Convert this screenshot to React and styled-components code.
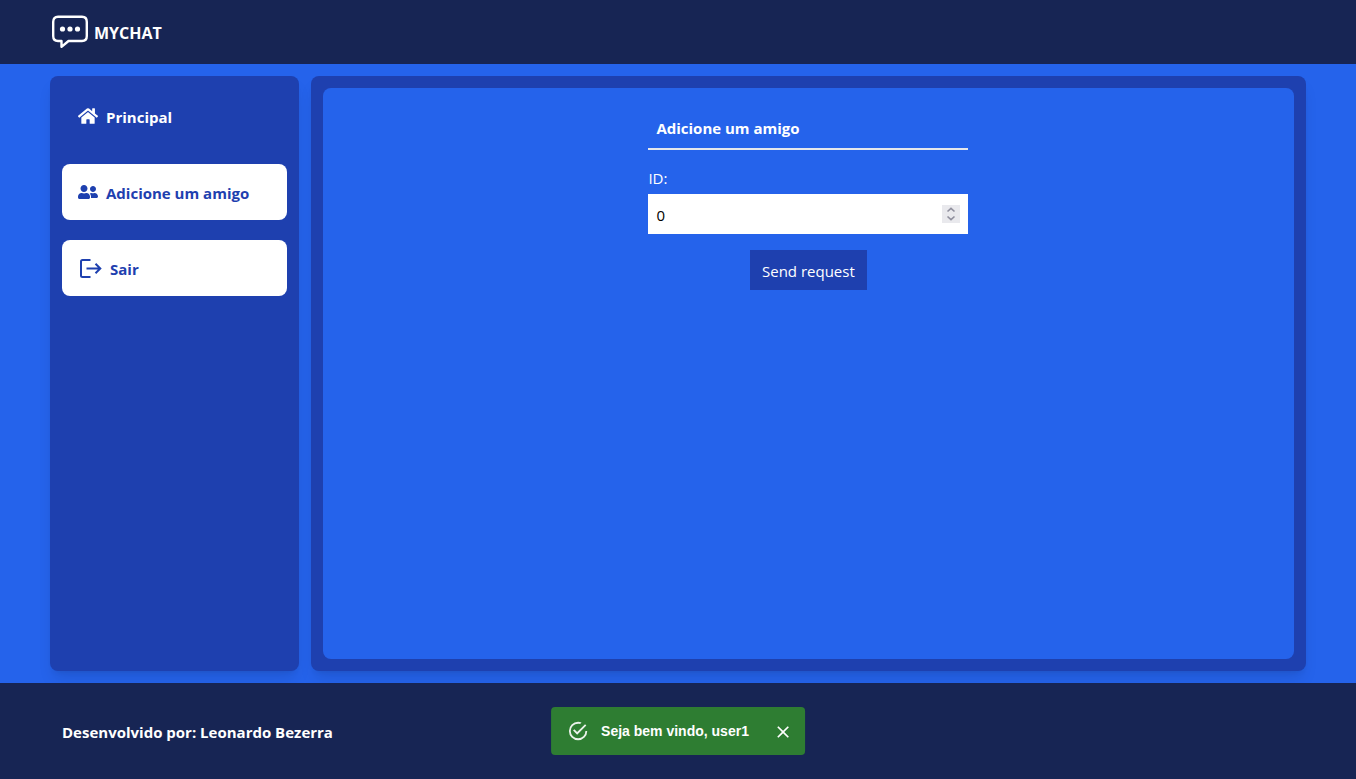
import React, { useState } from "react";
import styled, { createGlobalStyle } from "styled-components";
import { FaHome, FaUserFriends } from "react-icons/fa";

const GlobalStyle = createGlobalStyle`
  *, *::before, *::after { box-sizing: border-box; }
  body {
    margin: 0;
    background: #2563eb;
    color: #fff;
    font-family: "Segoe UI", "Open Sans", "Noto Sans", sans-serif;
    font-size: 15px;
    line-height: 24px;
  }
  button, input { font: inherit; }
`;

const Page = styled.div`
  display: flex;
  flex-direction: column;
  min-height: 100vh;
`;

const Header = styled.header`
  display: flex;
  align-items: center;
  height: 64px;
  padding: 0 50px;
  background: #172554;
`;

const Brand = styled.a`
  display: flex;
  align-items: center;
  gap: 4px;
  color: #fff;
  font-size: 16px;
  font-weight: 700;
  text-decoration: none;
`;

const BrandName = styled.span`
  padding-top: 2px;
`;

const Main = styled.main`
  flex: 1;
  display: grid;
  grid-template-columns: 1fr 4fr;
  gap: 12px;
  padding: 12px 50px;
`;

const Panel = styled.div`
  padding: 12px;
  border-radius: 8px;
  background: #1e40af;
  box-shadow: 0 10px 15px -3px rgba(0, 0, 0, 0.1), 0 4px 6px -4px rgba(0, 0, 0, 0.1);
`;

const Sidebar = styled(Panel).attrs({ as: "nav" })`
  display: flex;
  flex-direction: column;
  gap: 20px;
`;

const NavLink = styled.a`
  display: flex;
  align-items: center;
  gap: 8px;
  height: 56px;
  padding: 0 16px;
  border-radius: 8px;
  background: ${({ $active }) => ($active ? "transparent" : "#fff")};
  color: ${({ $active }) => ($active ? "#fff" : "#1e40af")};
  font-weight: 700;
  text-decoration: none;
`;

const NavLabel = styled.span`
  padding-top: 2px;
`;

const Content = styled.section`
  display: flex;
  justify-content: center;
  height: 100%;
  padding: 20px;
  border-radius: 8px;
  background: #2563eb;
`;

const Form = styled.form`
  display: flex;
  flex-direction: column;
  width: 320px;
`;

const Title = styled.h1`
  margin: 0 0 16px;
  padding: 8px;
  border-bottom: 2px solid #e5e7eb;
  font-size: 15px;
  font-weight: 700;
`;

const Label = styled.label`
  margin-bottom: 4px;
`;

const Field = styled.div`
  display: flex;
  align-items: center;
  height: 40px;
  padding: 0 8px;
  background: #fff;
`;

const NumberInput = styled.input`
  flex: 1;
  min-width: 0;
  padding: 2px 0 0;
  border: 0;
  outline: 0;
  background: transparent;
  color: #000;
  appearance: textfield;
  &::-webkit-inner-spin-button { appearance: none; margin: 0; }
`;

const Stepper = styled.div`
  display: flex;
  flex-direction: column;
  background: #e9e9ed;
`;

const StepButton = styled.button`
  display: flex;
  width: 18px;
  height: 9px;
  padding: 0;
  border: 0;
  background: transparent;
  color: #8f8f9d;
`;

const SubmitButton = styled.button`
  align-self: center;
  height: 40px;
  margin-top: 16px;
  padding: 2px 12px 0;
  border: 0;
  background: #1e40af;
  color: #fff;
`;

const Footer = styled.footer`
  display: flex;
  align-items: center;
  height: 96px;
  padding: 2px 62px 0;
  background: #172554;
  font-weight: 700;
`;

const Toast = styled.div`
  position: fixed;
  bottom: 24px;
  left: 50%;
  transform: translateX(-50%);
  display: flex;
  align-items: center;
  height: 48px;
  padding: 0 12px 0 16px;
  border-radius: 4px;
  background: #2e7d32;
  font-family: "Liberation Sans", Arial, sans-serif;
  font-size: 14px;
  font-weight: 700;
  line-height: 20px;
  white-space: nowrap;
`;

const ToastText = styled.span`
  margin: 0 24px 0 12px;
`;

const CloseButton = styled.button`
  display: flex;
  padding: 2px 0 0;
  border: 0;
  background: transparent;
  color: #fff;
`;

const ChatIcon = () => (
  <svg width="40" height="40" viewBox="0 0 40 40" fill="none" aria-hidden="true">
    <path
      d="M8 4.800H32Q36.800 4.800 36.800 10V24Q36.800 29 32 29H18.500L11.500 34.800V29H8Q3.200 29 3.200 24V10Q3.200 4.800 8 4.800Z"
      stroke="#fff"
      strokeWidth="2.400"
      strokeLinejoin="round"
    />
    <circle cx="12.500" cy="17" r="2.600" fill="#fff" />
    <circle cx="20" cy="17" r="2.600" fill="#fff" />
    <circle cx="27.500" cy="17" r="2.600" fill="#fff" />
  </svg>
);

const LogoutIcon = () => (
  <svg width="24" height="24" viewBox="0 0 24 24" fill="none" stroke="currentColor" aria-hidden="true">
    <path d="M12.500 4H4.500Q3 4 3 5.500V19.500Q3 21 4.500 21H12.500" strokeWidth="2" />
    <path d="M8.500 12.500H22M17.500 7.700L22.300 12.500L17.500 17.300" strokeWidth="2" />
  </svg>
);

const SuccessIcon = () => (
  <svg width="22" height="22" viewBox="0 0 24 24" fill="#fff" opacity="0.9" aria-hidden="true">
    <path d="M20,12A8,8 0 0,1 12,20A8,8 0 0,1 4,12A8,8 0 0,1 12,4C12.76,4 13.5,4.11 14.2, 4.31L15.77,2.74C14.61,2.26 13.34,2 12,2A10,10 0 0,0 2,12A10,10 0 0,0 12,22A10,10 0 0, 0 22,12M7.91,10.08L6.5,11.5L11,16L21,6L19.59,4.58L11,13.17L7.91,10.08Z" />
  </svg>
);

const CloseIcon = () => (
  <svg width="20" height="20" viewBox="0 0 24 24" fill="currentColor" aria-hidden="true">
    <path d="M19 6.41L17.59 5 12 10.59 6.41 5 5 6.41 10.59 12 5 17.59 6.41 19 12 13.41 17.59 19 19 17.59 13.41 12z" />
  </svg>
);

const Chevron = ({ d }) => (
  <svg width="18" height="9" viewBox="0 0 18 9" fill="none" stroke="currentColor" strokeWidth="1.600" aria-hidden="true">
    <path d={d} />
  </svg>
);

export default function App() {
  const [id, setId] = useState(0);
  const [toastOpen, setToastOpen] = useState(true);

  return (
    <>
      <GlobalStyle />
      <Page>
        <Header>
          <Brand href="#">
            <ChatIcon />
            <BrandName>MYCHAT</BrandName>
          </Brand>
        </Header>
        <Main>
          <Sidebar>
            <NavLink href="#principal" $active>
              <FaHome size={20} />
              <NavLabel>Principal</NavLabel>
            </NavLink>
            <NavLink href="#amigo">
              <FaUserFriends size={20} />
              <NavLabel>Adicione um amigo</NavLabel>
            </NavLink>
            <NavLink href="#sair">
              <LogoutIcon />
              <NavLabel>Sair</NavLabel>
            </NavLink>
          </Sidebar>
          <Panel>
            <Content>
              <Form onSubmit={(e) => e.preventDefault()}>
                <Title>Adicione um amigo</Title>
                <Label htmlFor="friend-id">ID:</Label>
                <Field>
                  <NumberInput
                    id="friend-id"
                    type="number"
                    value={id}
                    onChange={(e) => setId(e.target.value)}
                  />
                  <Stepper>
                    <StepButton type="button" aria-label="Aumentar" onClick={() => setId(Number(id) + 1)}>
                      <Chevron d="M5.500 6.500L9 3.300L12.500 6.500" />
                    </StepButton>
                    <StepButton type="button" aria-label="Diminuir" onClick={() => setId(Number(id) - 1)}>
                      <Chevron d="M5.500 2.500L9 5.700L12.500 2.500" />
                    </StepButton>
                  </Stepper>
                </Field>
                <SubmitButton type="submit">Send request</SubmitButton>
              </Form>
            </Content>
          </Panel>
        </Main>
        <Footer>Desenvolvido por: Leonardo Bezerra</Footer>
      </Page>
      {toastOpen && (
        <Toast role="alert">
          <SuccessIcon />
          <ToastText>Seja bem vindo, user1</ToastText>
          <CloseButton type="button" aria-label="Fechar" onClick={() => setToastOpen(false)}>
            <CloseIcon />
          </CloseButton>
        </Toast>
      )}
    </>
  );
}
